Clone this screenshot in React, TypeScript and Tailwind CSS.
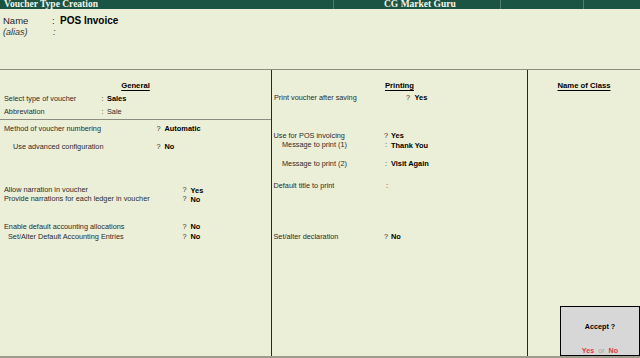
import React from 'react';

// 한 줄: 라벨 / 구분 기호(: 또는 ?) / 값
type RowProps = {
  label: string;
  mark?: string;
  value?: string;
  bold?: boolean;
  box: string;
  markBox?: string;
  className?: string;
};

function Row({ label, mark = '', value = '', bold = true, box, markBox = 'w-[8px]', className = '' }: RowProps) {
  return (
    <div className={`flex items-center whitespace-nowrap text-[7.3px] text-[#2b2b2b] ${className}`}>
      <span className={`shrink-0 ${box}`}>{label}</span>
      <span className={`shrink-0 ${markBox}`}>{mark}</span>
      <span className={bold ? 'font-bold text-black text-[7.4px]' : ''}>{value}</span>
    </div>
  );
}

function Heading({ children }: { children: React.ReactNode }) {
  return (
    <div className="h-[10px] leading-[10px] text-center">
      <span className="text-[7.7px] font-bold text-black underline underline-offset-[2px] decoration-[1px]">
        {children}
      </span>
    </div>
  );
}

export default function App() {
  return (
    <div className="relative w-[640px] h-[358px] overflow-hidden bg-[#ecefd7] flex flex-col font-['Liberation_Sans',Arial,sans-serif]">
      {/* title bar */}
      <div className="h-[9px] shrink-0 bg-[#1b5443] flex text-[9.5px] leading-[9px] font-bold text-[#f4f4ea] font-['Liberation_Serif','Times_New_Roman',serif] overflow-hidden">
        <div className="w-[333px] pl-[4px] whitespace-nowrap">Voucher Type Creation</div>
        <div className="w-[167px] pl-[50px] border-l border-[#4f7d6f] whitespace-nowrap">CG Market Guru</div>
        <div className="w-[83px] border-l border-[#4f7d6f]" />
        <div className="flex-1 border-l border-[#4f7d6f]" />
      </div>

      {/* name block */}
      <div className="h-[60px] shrink-0 pt-[6px] text-[#1e1e1e]">
        <div className="flex items-center h-[12px] leading-[12px] whitespace-nowrap">
          <span className="w-[52px] pl-[3px] text-[9.5px]">Name</span>
          <span className="w-[8px] text-[9.5px]">:</span>
          <span className="text-[10px] font-bold text-black">POS Invoice</span>
        </div>
        <div className="flex items-center h-[10px] leading-[10px] whitespace-nowrap text-[9px] italic text-[#333]">
          <span className="w-[53px] pl-[3px]">(alias)</span>
          <span>:</span>
        </div>
      </div>

      {/* main area */}
      <div className="flex-1 flex border-t border-[#8c8d7e] border-b-2 border-b-[#9c9d8c]">
        {/* General */}
        <div className="w-[272px] shrink-0 border-r border-[#262626] flex flex-col">
          <div className="h-[50px] shrink-0 border-b border-[#8c8d7e] pt-[8px]">
            <Heading>General</Heading>
            <Row className="h-[10px] mt-[6px]" box="w-[101.5px] pl-[4px]" markBox="w-[5.5px]" label="Select type of voucher" mark=":" value="Sales" />
            <Row className="h-[10px] mt-[3px]" box="w-[101.5px] pl-[4px]" markBox="w-[5.5px]" label="Abbreviation" mark=":" value="Sale" bold={false} />
          </div>
          <div className="pt-[4px]">
            <Row className="h-[10px]" box="w-[156.5px] pl-[4px]" label="Method of voucher numbering" mark="?" value="Automatic" />
            <Row className="h-[10px] mt-[8px]" box="w-[156.5px] pl-[13px]" label="Use advanced configuration" mark="?" value="No" />
            <Row className="h-[9px] mt-[34px]" box="w-[182.5px] pl-[4px]" label="Allow narration in voucher" mark="?" value="Yes" />
            <Row className="h-[9px]" box="w-[182.5px] pl-[4px]" label="Provide narrations for each ledger in voucher" mark="?" value="No" />
            <Row className="h-[10px] mt-[18px]" box="w-[182.5px] pl-[4px]" label="Enable default accounting allocations" mark="?" value="No" />
            <Row className="h-[10px]" box="w-[182.5px] pl-[8px]" label="Set/Alter Default Accounting Entries" mark="?" value="No" />
          </div>
        </div>

        {/* Printing */}
        <div className="w-[256px] shrink-0 border-r border-[#262626] pt-[8px]">
          <Heading>Printing</Heading>
          <Row className="h-[10px] mt-[5px]" box="w-[134px] pl-[2px]" markBox="w-[8.5px]" label="Print voucher after saving" mark="?" value="Yes" />
          <Row className="h-[10px] mt-[28px]" box="w-[112px] pl-[1.5px]" markBox="w-[7px]" label="Use for POS invoicing" mark="?" value="Yes" />
          <Row className="h-[9px]" box="w-[113px] pl-[10px]" markBox="w-[6px]" label="Message to print (1)" mark=":" value="Thank You" />
          <Row className="h-[10px] mt-[9px]" box="w-[113px] pl-[10px]" markBox="w-[6px]" label="Message to print (2)" mark=":" value="Visit Again" />
          <Row className="h-[10px] mt-[12px]" box="w-[114px] pl-[1.5px]" markBox="w-[6px]" label="Default title to print" mark=":" />
          <Row className="h-[10px] mt-[41px]" box="w-[112px] pl-[1.5px]" markBox="w-[7px]" label="Set/alter declaration" mark="?" value="No" />
        </div>

        {/* Name of Class */}
        <div className="flex-1 pt-[8px]">
          <Heading>Name of Class</Heading>
        </div>
      </div>

      {/* accept prompt */}
      <div className="absolute right-0 bottom-[2px] w-[80px] h-[50px] border border-black bg-[#d7d7d7] flex flex-col items-center">
        <div className="mt-[15px] h-[10px] leading-[10px] text-[7.2px] font-bold text-black">Accept ?</div>
        <div className="mt-[15px] h-[8px] leading-[8px] text-[7.2px] whitespace-nowrap">
          <span className="font-bold text-[#e23a4a]">Yes</span>
          <span className="text-[#a3a3a3] mx-[4px]">or</span>
          <span className="font-bold text-[#e23a4a]">No</span>
        </div>
      </div>
    </div>
  );
}
